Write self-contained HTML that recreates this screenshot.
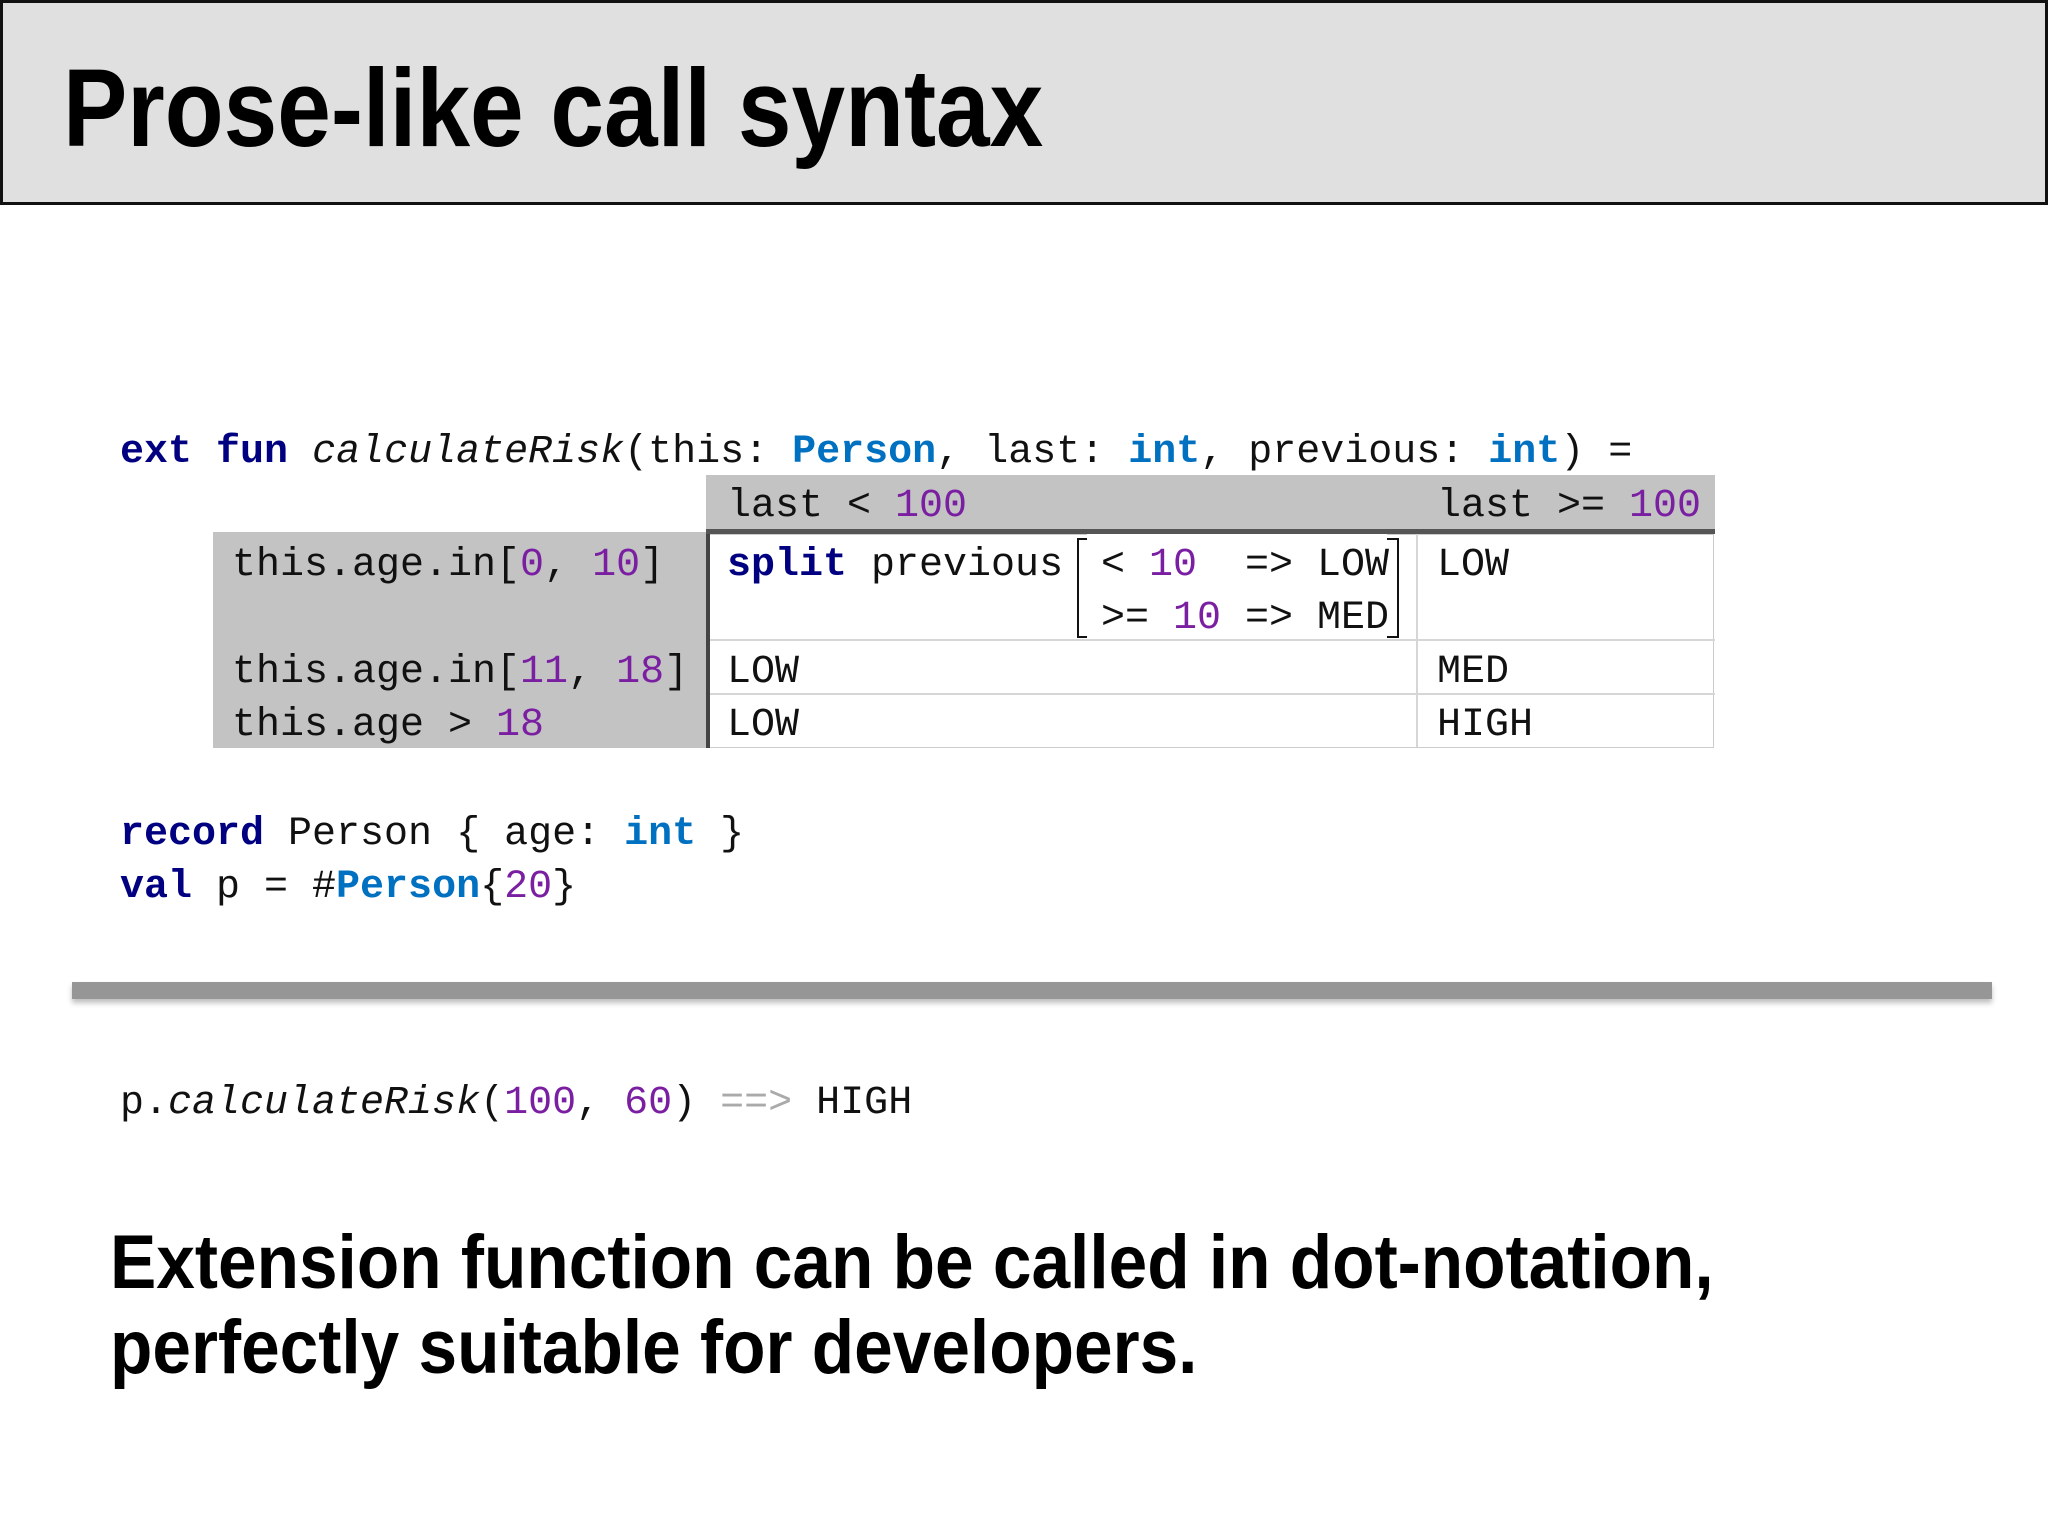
<!DOCTYPE html>
<html><head><meta charset="utf-8"><style>
body{margin:0;width:2048px;height:1536px;background:#fff;position:relative;overflow:hidden;font-family:"Liberation Sans",sans-serif}
.hdr{position:absolute;left:0;top:0;width:2042px;height:199px;background:#e0e0e0;border:3px solid #111}
.title{position:absolute;left:63px;top:44px;font-weight:bold;font-size:110px;line-height:130px;white-space:nowrap;transform:scaleX(0.876);transform-origin:left;color:#000}
.c{position:absolute;font-family:"Liberation Mono",monospace;font-size:40px;line-height:50px;white-space:pre;color:#111}
.k{color:#000080;font-weight:bold}
.t{color:#0070c0;font-weight:bold}
.n{color:#7a1fa2}
.i{font-style:italic}
.g{position:absolute;background:#c3c3c3}
.b{position:absolute;font-weight:bold;font-size:76px;line-height:86px;white-space:nowrap;transform:scaleX(0.913);transform-origin:left;color:#000}
</style></head><body>
<div class="hdr"></div>
<div class="title">Prose-like call syntax</div>

<div class="c" style="left:120px;top:428px"><span class="k">ext</span> <span class="k">fun</span> <span class="i">calculateRisk</span>(this: <span class="t">Person</span>, last: <span class="t">int</span>, previous: <span class="t">int</span>) =</div>

<div class="g" style="left:706px;top:475px;width:1009px;height:54px;border-bottom:5px solid #555"></div>
<div class="g" style="left:213px;top:532px;width:493px;height:216px"></div>
<div style="position:absolute;left:706px;top:534px;width:4px;height:214px;background:#444"></div>
<div style="position:absolute;left:710px;top:534px;width:1003px;height:212px;border:1px solid #ccc;border-left:none"></div>
<div style="position:absolute;left:710px;top:639px;width:1005px;height:2px;background:#d6d6d6"></div>
<div style="position:absolute;left:710px;top:693px;width:1005px;height:2px;background:#d6d6d6"></div>
<div style="position:absolute;left:1416px;top:534px;width:2px;height:213px;background:#d6d6d6"></div>
<div style="position:absolute;left:1077px;top:538px;width:318px;height:96px;border:2.5px solid #111;"></div>
<div style="position:absolute;left:1087px;top:534px;width:300px;height:104px;background:#fff"></div>

<div class="c" style="left:727px;top:482px">last &lt; <span class="n">100</span></div>
<div class="c" style="left:1437px;top:482px">last &gt;= <span class="n">100</span></div>
<div class="c" style="left:232px;top:541px">this.age.in[<span class="n">0</span>, <span class="n">10</span>]</div>
<div class="c" style="left:727px;top:541px"><span class="k">split</span> previous</div>
<div class="c" style="left:1101px;top:541px">&lt; <span class="n">10</span>  =&gt; LOW</div>
<div class="c" style="left:1101px;top:594px">&gt;= <span class="n">10</span> =&gt; MED</div>
<div class="c" style="left:1437px;top:541px">LOW</div>
<div class="c" style="left:232px;top:648px">this.age.in[<span class="n">11</span>, <span class="n">18</span>]</div>
<div class="c" style="left:727px;top:648px">LOW</div>
<div class="c" style="left:1437px;top:648px">MED</div>
<div class="c" style="left:232px;top:701px">this.age &gt; <span class="n">18</span></div>
<div class="c" style="left:727px;top:701px">LOW</div>
<div class="c" style="left:1437px;top:701px">HIGH</div>

<div class="c" style="left:120px;top:810px"><span class="k">record</span> Person { age: <span class="t">int</span> }</div>
<div class="c" style="left:120px;top:863px"><span class="k">val</span> p = #<span class="t">Person</span>{<span class="n">20</span>}</div>

<div style="position:absolute;left:72px;top:982px;width:1920px;height:17px;background:#969696;box-shadow:0 4px 5px rgba(0,0,0,0.25)"></div>

<div class="c" style="left:120px;top:1079px">p.<span class="i">calculateRisk</span>(<span class="n">100</span>, <span class="n">60</span>) <span style="color:#aaa">==&gt;</span> HIGH</div>

<div class="b" style="left:110px;top:1220px">Extension function can be called in dot-notation,</div>
<div class="b" style="left:110px;top:1305px">perfectly suitable for developers.</div>
</body></html>
